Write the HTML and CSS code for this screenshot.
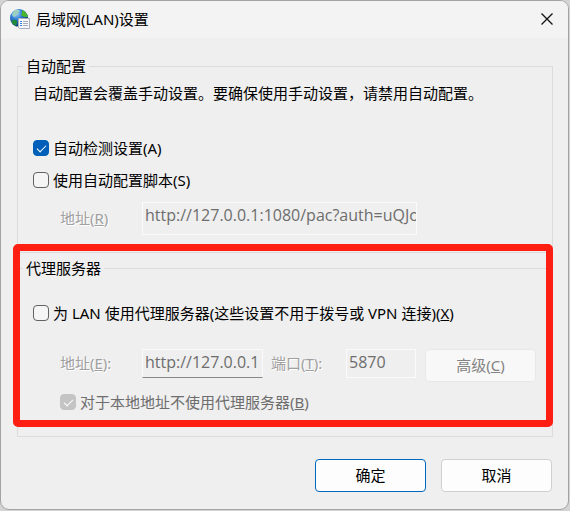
FILE: index.html
```html
<!DOCTYPE html>
<html lang="zh-CN">

<head>
  <meta charset="utf-8">
  <title>局域网(LAN)设置</title>
  <link rel="stylesheet" href="styles.css">
</head>

<body>
  <form class="dialog">
    <!-- 标题栏 -->
    <header class="titleBar">
      <svg class="icon" width="20" height="20" viewBox="0 0 20 20" aria-hidden="true">
        <defs>
          <radialGradient id="sea" cx="35%" cy="25%" r="80%">
            <stop offset="0" stop-color="#a9d4f5"></stop>
            <stop offset="0.4" stop-color="#2f7fd6"></stop>
            <stop offset="1" stop-color="#061c66"></stop>
          </radialGradient>
        </defs>
        <circle cx="9" cy="9" r="9" fill="url(#sea)"></circle>
        <path d="M5 1 Q9 0 10 2 Q8 3 8 5 Q6 6 5 8 Q3 8 2 6 Q2 3 5 1 Z" fill="#9ccfc0"></path>
        <path d="M12 1 Q17 3 18 8 L14 8 L11 6 L12 4 Z" fill="#48b52c"></path>
        <path d="M3 11 Q6 10 7 12 Q7 15 6 17 Q2 15 1 12 Z" fill="#1f8a3a"></path>
        <path d="M8.500 9.500 H19.500 V19.500 H9.500 L7.500 17.500 H8.500 Z" fill="#f5f7fa" stroke="#a9b1bc"></path>
        <path d="M13 12.500 H18 M13 14.500 H18 M13 16.500 H18" stroke="#a3acb8"></path>
        <path d="M10 12.500 H12 M10 14.500 H12 M10 16.500 H12" stroke="#2f7fd6"></path>
      </svg>
      <h1>局域网(LAN)设置</h1>
      <button type="button" class="close" aria-label="关闭">
        <svg width="12" height="12" viewBox="0 0 12 12">
          <path d="M0.500 0.500 L11.500 11.500 M11.500 0.500 L0.500 11.500" stroke="#111" stroke-width="1.300"></path>
        </svg>
      </button>
    </header>

    <div class="content">
      <!-- 自动配置 -->
      <fieldset class="group autoGroup">
        <legend>自动配置</legend>
        <p class="hint">自动配置会覆盖手动设置。要确保使用手动设置，请禁用自动配置。</p>
        <label class="check"><input type="checkbox" checked>自动检测设置(A)</label>
        <label class="check"><input type="checkbox">使用自动配置脚本(S)</label>
        <div class="row">
          <label class="name" for="script">地址(<u>R</u>)</label>
          <input class="field script" id="script" type="text" value="http://127.0.0.1:1080/pac?auth=uQJo" disabled>
        </div>
      </fieldset>

      <!-- 代理服务器 -->
      <fieldset class="group proxyGroup">
        <legend>代理服务器</legend>
        <label class="check"><input type="checkbox"><span>为 LAN 使用代理服务器(这些设置不用于拨号或 VPN 连接)(<u>X</u>)</span></label>
        <div class="row">
          <label class="name" for="address">地址(<u>E</u>):</label>
          <input class="field address" id="address" type="text" value="http://127.0.0.1" disabled>
          <label class="name portName" for="port">端口(<u>T</u>):</label>
          <input class="field port" id="port" type="text" value="5870" disabled>
          <button type="button" class="button advanced" disabled>高级(<u>C</u>)</button>
        </div>
        <label class="check local"><input type="checkbox" checked disabled><span>对于本地地址不使用代理服务器(<u>B</u>)</span></label>
        <!-- 红色标记框 -->
        <div class="mark"></div>
      </fieldset>

      <footer class="buttons">
        <button type="submit" class="button ok">确定</button>
        <button type="button" class="button">取消</button>
      </footer>
    </div>
  </form>
</body>

</html>
```
FILE: styles.css
```css
* {
  box-sizing: border-box;
  margin: 0;
  padding: 0;
}

body {
  background-color: #d4d4d4;
  font: 15px/20px "Noto Sans", "Noto Sans CJK SC", sans-serif;
  color: #000;
}

input,
button {
  font: inherit;
}

/* 对话框 */
.dialog {
  margin: 0 1px 1px 0;
  border: 1px solid #a3a3a3;
  border-radius: 9px;
  background-color: #efefef;
  overflow: hidden;
}

/* 标题栏 */
.titleBar {
  display: flex;
  align-items: center;
  height: 37px;
  padding: 0 15px 2px 9px;
  background-color: #f3f3f3;
}

.titleBar h1 {
  flex: 1;
  margin-left: 6px;
  font-size: 15px;
  font-weight: normal;
}

.close {
  display: flex;
  border: none;
  background: none;
}

.content {
  padding: 18px 15px 17px 16px;
}

/* 分组框 */
.group {
  position: relative;
  min-width: 0;
  border: 1px solid #dcdcdc;
}

.group legend {
  margin-left: -10px;
  padding: 0 3px;
}

.autoGroup {
  margin-bottom: 5px;
  padding: 7px 15px 17px;
}

.proxyGroup {
  padding: 25px 16px 24px 15px;
}

.hint {
  margin-bottom: 35px;
}

/* 复选框 */
.check {
  display: flex;
  align-items: center;
  gap: 4px;
  margin-bottom: 12px;
}

.check input {
  appearance: none;
  width: 16px;
  height: 16px;
  border: 1px solid #626262;
  border-radius: 4px;
  background-color: #f5f5f5;
}

.check input:checked {
  display: grid;
  place-items: center;
  border-color: #005fb8;
  background-color: #005fb8;
}

.check input:checked::before {
  content: "";
  width: 8px;
  height: 4px;
  margin-bottom: 2px;
  border-left: 1px solid #fff;
  border-bottom: 1px solid #fff;
  transform: rotate(-45deg);
}

.check input:disabled {
  border-color: #c4c4c4;
  background-color: #c4c4c4;
}

/* 输入行 */
.row {
  display: flex;
  align-items: flex-start;
  padding-left: 27px;
}

.name {
  width: 82px;
  padding-top: 6px;
  color: #a0a0a0;
  text-shadow: 1px 1px #fff;
}

.field {
  height: 29px;
  padding: 0 0 4px 2px;
  border: 1px solid #fafafa;
  background-color: #efefef;
  color: #6d6d6d;
  font-family: "Open Sans", "Noto Sans CJK SC", sans-serif;
  font-size: 16px;
}

.script {
  width: 275px;
  height: 33px;
  padding-bottom: 8px;
}

.address {
  width: 121px;
  border-bottom-color: #868686;
}

.portName {
  width: 75px;
  margin-left: 8px;
}

.port {
  width: 70px;
}

.proxyGroup .row {
  margin: 26px 0 10px;
}

.proxyGroup .name {
  padding-top: 4px;
}

.local {
  margin: 0 0 0 27px;
  color: #6d6d6d;
}

/* 按钮 */
.button {
  width: 111px;
  height: 33px;
  padding-bottom: 2px;
  border: 1px solid #d0d0d0;
  border-radius: 4px;
  background-color: #fdfdfd;
  color: #000;
}

.ok {
  border-color: #0067c0;
}

.advanced {
  margin-left: auto;
  border-color: #e8e8e8;
  background-color: #f8f8f8;
  color: #838383;
}

.buttons {
  display: flex;
  justify-content: flex-end;
  gap: 15px;
  margin-top: 22px;
  padding-right: 1px;
}

/* 盖在分组上面的标记 */
.mark {
  position: absolute;
  top: -34px;
  right: -1px;
  bottom: 9px;
  left: -5px;
  border: 7px solid #ff1f12;
  border-radius: 5px;
  pointer-events: none;
}
```
